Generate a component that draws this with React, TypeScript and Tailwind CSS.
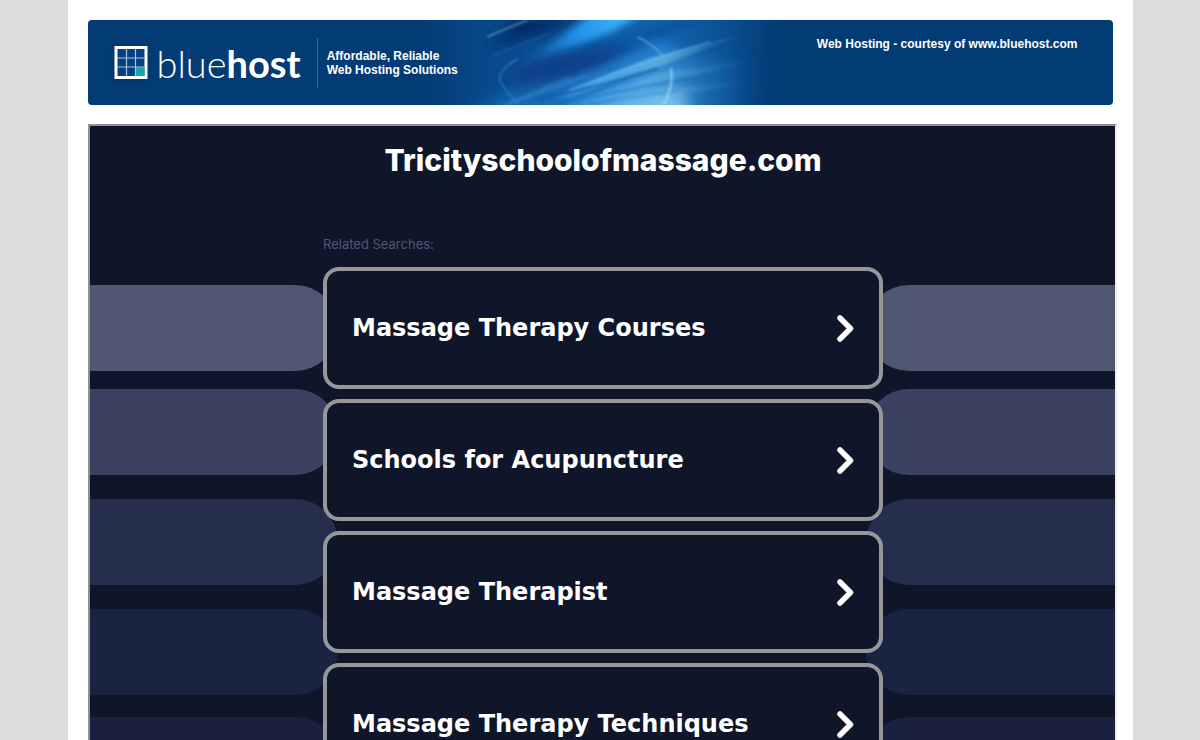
const searches = [
  'Massage Therapy Courses',
  'Schools for Acupuncture',
  'Massage Therapist',
  'Massage Therapy Techniques',
];

const stripes = [
  { color: 'bg-[#4e5672]', gap: 'mb-[18px]' },
  { color: 'bg-[#3b4261]', gap: 'mb-6' },
  { color: 'bg-[#262e4d]', gap: 'mb-6' },
  { color: 'bg-[#1a2342]', gap: 'mb-[22px]' },
  { color: 'bg-[#1a2140]', gap: '' },
];

function BannerArt() {
  return (
    <svg
      className="absolute inset-y-0 left-[332px] h-[85px] w-[360px]"
      viewBox="0 0 360 85"
      fill="none"
      aria-hidden="true"
    >
      <defs>
        <linearGradient id="base" x1="0" x2="360" y1="0" y2="0" gradientUnits="userSpaceOnUse">
          <stop offset="0" stopColor="#0d57a0" stopOpacity="0" />
          <stop offset="0.3" stopColor="#0d57a0" stopOpacity="0.8" />
          <stop offset="0.7" stopColor="#1563ae" />
          <stop offset="0.85" stopColor="#0d57a0" stopOpacity="0.7" />
          <stop offset="0.99" stopColor="#0d57a0" stopOpacity="0" />
        </linearGradient>
        <linearGradient id="ray" x1="110" x2="335" y1="0" y2="0" gradientUnits="userSpaceOnUse">
          <stop offset="0" stopColor="#2f95e0" stopOpacity="0" />
          <stop offset="0.3" stopColor="#48b0f8" />
          <stop offset="0.6" stopColor="#6cb8e4" stopOpacity="0.8" />
          <stop offset="1" stopColor="#2a7cc4" stopOpacity="0" />
        </linearGradient>
        <linearGradient id="glow" x1="130" x2="335" y1="0" y2="0" gradientUnits="userSpaceOnUse">
          <stop offset="0" stopColor="#1c78cc" stopOpacity="0.7" />
          <stop offset="0.5" stopColor="#3f9bdc" />
          <stop offset="1" stopColor="#1563ae" stopOpacity="0" />
        </linearGradient>
        <linearGradient id="beam" x1="100" x2="200" y1="40" y2="0" gradientUnits="userSpaceOnUse">
          <stop offset="0" stopColor="#1f86dc" stopOpacity="0" />
          <stop offset="0.6" stopColor="#2492ea" />
          <stop offset="1" stopColor="#35b0ff" />
        </linearGradient>
        <filter id="soft" x="-30%" y="-60%" width="160%" height="220%">
          <feGaussianBlur stdDeviation="8" />
        </filter>
        <filter id="medium" x="-20%" y="-50%" width="140%" height="200%">
          <feGaussianBlur stdDeviation="3.5" />
        </filter>
        <filter id="fine" x="-20%" y="-50%" width="140%" height="200%">
          <feGaussianBlur stdDeviation="1.4" />
        </filter>
        <filter id="hair" x="-20%" y="-50%" width="140%" height="200%">
          <feGaussianBlur stdDeviation="0.8" />
        </filter>
      </defs>
      <rect width="360" height="85" fill="url(#base)" />
      <g filter="url(#soft)">
        <path d="M96 -6H170L128 14L70 28Z" fill="#042a66" />
        <path d="M80 56Q108 34 150 30L215 26L185 50L100 70Z" fill="#07408a" />
        <path d="M40 92L110 70L170 64L150 94Z" fill="#1a74c0" opacity="0.8" />
        <path d="M130 96L215 46L262 34L340 40L320 96Z" fill="url(#glow)" />
        <path d="M165 96L215 76L262 72L270 96Z" fill="#7cc8ee" />
      </g>
      <g filter="url(#medium)">
        <path d="M84 50L130 24L172 -6H222L192 12L150 28Z" fill="url(#beam)" />
        <path d="M112 74L190 42L240 20L262 30L190 60Z" fill="#2b8fe4" opacity="0.5" />
        <path d="M200 20L250 0L300 -4L240 18Z" fill="#0b4a92" opacity="0.5" />
      </g>
      <g filter="url(#fine)">
        <path d="M128 78L230 38L330 12L240 46L150 78Z" fill="url(#ray)" opacity="0.85" />
        <path d="M140 84L245 52L340 40L245 62L165 86Z" fill="url(#ray)" opacity="0.55" />
        <path d="M165 87L250 68L335 60L250 78L200 90Z" fill="url(#ray)" opacity="0.5" />
        <path d="M118 80L180 65L238 48" stroke="#0d55a4" strokeWidth="2.5" opacity="0.85" />
        <path d="M138 84L250 61L290 54" stroke="#1162ad" strokeWidth="2" opacity="0.6" />
        <path d="M170 84L260 70" stroke="#2375bd" strokeWidth="2" opacity="0.5" />
        <path d="M70 90L150 58" stroke="#459fe0" strokeWidth="2" opacity="0.4" />
      </g>
      <g filter="url(#hair)">
        <path d="M67 17L88 8L108 0" stroke="#8fb9e0" strokeWidth="1.5" opacity="0.6" />
        <path d="M72 36L130 13" stroke="#4f94d0" opacity="0.4" />
        <path d="M150 70L200 51L250 34L290 22" stroke="#8fcdf0" strokeWidth="1.5" opacity="0.4" />
        <path d="M90 84L165 56" stroke="#6db5ea" opacity="0.4" />
        <path d="M217 17Q234 24 244 38" stroke="#63b3ea" strokeWidth="1.5" opacity="0.8" />
        <path d="M251 48Q254 68 243 86" stroke="#9edcf6" strokeWidth="2" opacity="0.8" />
        <path d="M98 39Q72 53 83 66Q90 76 98 84" stroke="#3d94d8" strokeWidth="1.5" opacity="0.6" />
      </g>
    </svg>
  );
}

function Logo() {
  return (
    <a href="#" className="flex items-center text-white" aria-label="bluehost">
      <svg width="34" height="34" viewBox="0 0 34 34" className="drop-shadow-md" aria-hidden="true">
        <path d="M2 1.5H32V31.5H2Z" fill="#063f83" stroke="#fff" strokeWidth="3" />
        <path d="M22 21.5H30.5V30H22Z" fill="#12a5ac" />
        <path d="M12.5 3V30M21.5 3V30M3 12H31M3 21H31" stroke="#a9c4de" strokeWidth="1.2" />
      </svg>
      <span className="ml-[9px] font-[Lato,sans-serif] text-[38px] leading-[50px] font-light">
        blue<span className="font-bold">host</span>
      </span>
    </a>
  );
}

function Banner() {
  return (
    <header className="relative mr-1 flex h-[85px] items-start justify-between overflow-hidden rounded bg-[#033b74] pt-[18px] pr-[35px] pl-[26px] font-['Liberation_Sans',Arial,sans-serif] text-xs font-bold text-white">
      <BannerArt />
      <div className="relative flex items-center">
        <Logo />
        <p className="ml-4 flex h-[50px] items-center border-l border-[#2a6ea8] pl-[9px] leading-[14px]">
          Affordable, Reliable
          <br />
          Web Hosting Solutions
        </p>
      </div>
      <a href="#" className="relative leading-3">
        Web Hosting - courtesy of www.bluehost.com
      </a>
    </header>
  );
}

function Stripes() {
  return (
    <div className="col-start-1 row-start-1 h-0 pt-[159px]" aria-hidden="true">
      {stripes.map(({ color, gap }) => (
        <div key={color} className={`flex justify-between gap-[528px] ${gap}`}>
          <div className={`h-[86px] flex-1 rounded-r-full ${color}`} />
          <div className={`h-[86px] flex-1 rounded-l-full ${color}`} />
        </div>
      ))}
    </div>
  );
}

function Chevron() {
  return (
    <svg width="18" height="28" viewBox="0 0 18 28" fill="none" aria-hidden="true">
      <path
        d="M4 4L14.5 14.5L4 25"
        stroke="#fff"
        strokeWidth="5.5"
        strokeLinecap="round"
        strokeLinejoin="round"
      />
    </svg>
  );
}

export default function App() {
  return (
    <div className="min-h-screen bg-[#ddd]">
      <div className="mx-auto min-h-screen max-w-[1065px] bg-white py-5 pr-4 pl-5">
        <Banner />
        <main className="mt-[19px] grid overflow-hidden border-2 border-[#8f8f96] border-r-[#eee] border-b-[#eee] bg-[#10162a] font-[Inter,sans-serif]">
          <Stripes />
          <div className="z-10 col-start-1 row-start-1 pr-4 pb-10 pl-[18px]">
            <h1 className="pt-4 text-center text-3xl leading-9 font-extrabold text-white">
              Tricityschoolofmassage.com
            </h1>
            <section className="mx-auto mt-14 max-w-[560px]">
              <h2 className="text-[13px] leading-5 text-[#4e5672]">Related Searches:</h2>
              <ul className="mt-[13px] flex flex-col gap-[10px]">
                {searches.map((search) => (
                  <li key={search}>
                    <a
                      href="#"
                      className="flex h-[122px] items-center justify-between rounded-2xl border-4 border-[#97979b] bg-[#10162a] px-[25px] font-['DejaVu_Sans',Verdana,sans-serif] text-2xl font-bold text-white"
                    >
                      {search}
                      <Chevron />
                    </a>
                  </li>
                ))}
              </ul>
            </section>
          </div>
        </main>
      </div>
    </div>
  );
}
